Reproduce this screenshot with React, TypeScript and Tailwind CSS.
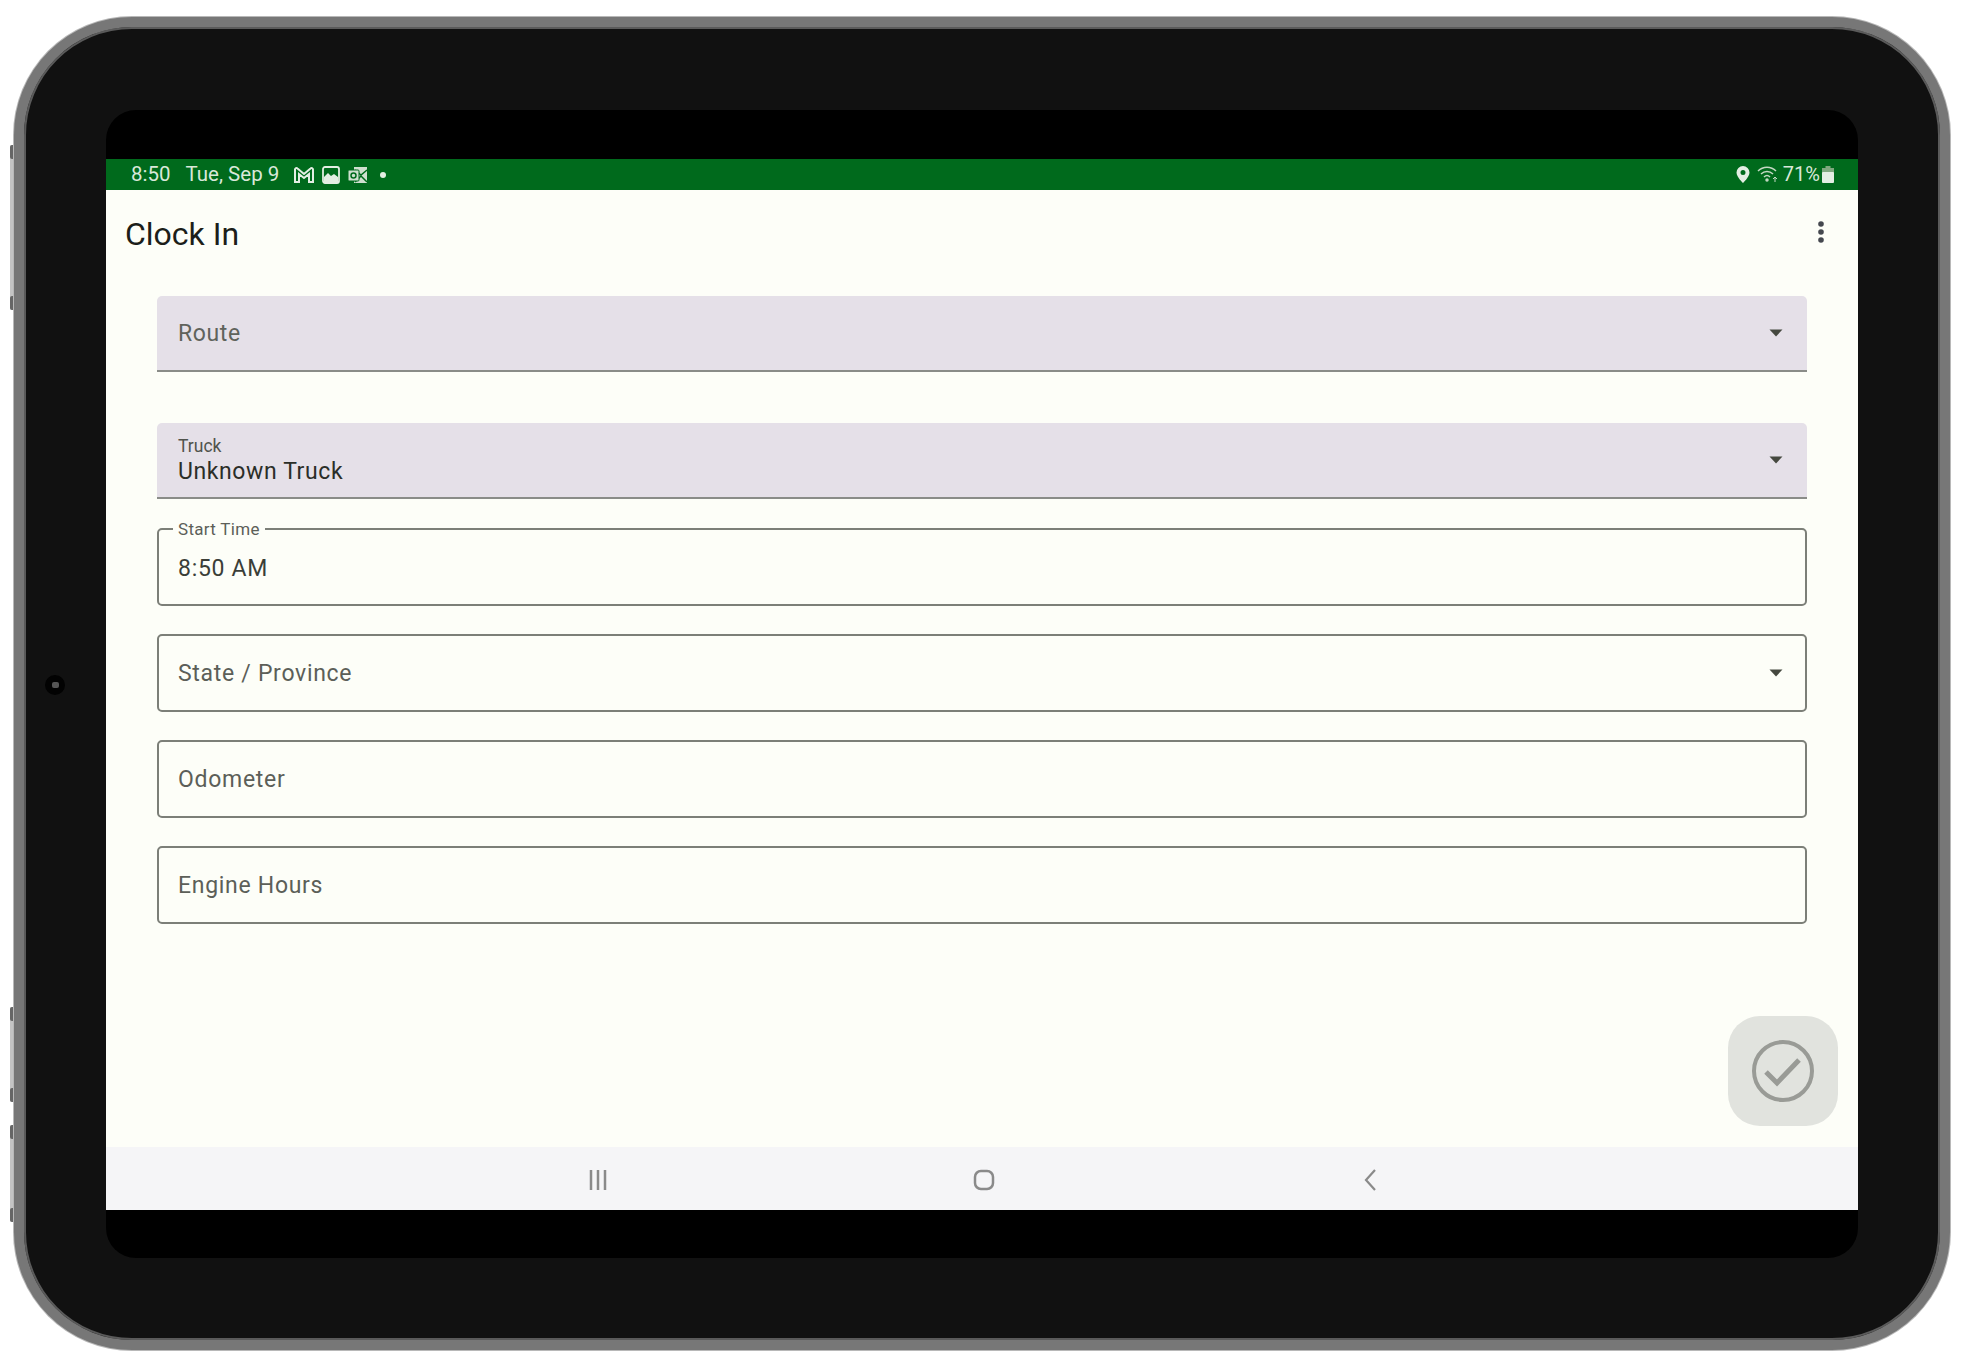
const font = { fontFamily: "Roboto, sans-serif" };

function GmailIcon() {
  return (
    <svg width="22" height="18" viewBox="0 0 22 18" fill="none" stroke="#e3eee3" strokeWidth="2">
      <path d="M2 16V3.5C2 2 3.5 1.5 4.5 2.5L11 8l6.500-5.500C18.500 1.500 20 2 20 3.500V16h-4V8l-5 4-5-4v8z" />
    </svg>
  );
}

function PhotoIcon() {
  return (
    <svg width="18" height="18" viewBox="0 0 18 18">
      <rect x="1" y="1" width="16" height="16" rx="2" fill="none" stroke="#e3eee3" strokeWidth="1.800" />
      <path d="M2 11l4-4 3 3 3-2 4 3v5H2z" fill="#e3eee3" />
    </svg>
  );
}

function OutlookIcon() {
  return (
    <svg width="21" height="18" viewBox="0 0 21 18">
      <path d="M7 1h13v16H7z" fill="#cfe0cf" />
      <path d="M8 4l6 5 6-5M8 16l6-6 6 6" fill="none" stroke="#006a1c" strokeWidth="1.500" />
      <rect x="1" y="4" width="11" height="11" rx="1" fill="#cfe0cf" stroke="#006a1c" />
      <circle cx="6.500" cy="9.500" r="2.500" fill="none" stroke="#006a1c" strokeWidth="1.500" />
    </svg>
  );
}

function StatusBar() {
  return (
    <div style={font} className="flex h-[31px] items-center justify-between bg-[#006a1c] pl-[25px] pr-[24px] text-[#d9e8d9]">
      <div className="flex items-center text-[20.500px]">
        <span>8:50</span>
        <span className="ml-[15px]">Tue, Sep 9</span>
        <span className="ml-[14px] flex items-center gap-[7px]">
          <GmailIcon />
          <PhotoIcon />
          <OutlookIcon />
        </span>
        <span className="ml-[12px] h-[6px] w-[6px] rounded-full bg-[#e3eee3]" />
      </div>
      <div className="flex items-center pb-[1px] text-[20px]">
        <svg width="14" height="17" viewBox="0 0 14 17">
          <path fillRule="evenodd" d="M7 0a6.500 6.500 0 0 1 6.500 6.500C13.500 11 7 17 7 17S.5 11 .5 6.500A6.500 6.500 0 0 1 7 0zm0 4a2.500 2.500 0 1 0 0 5 2.500 2.500 0 0 0 0-5z" fill="#e3eee3" />
        </svg>
        <svg className="ml-[7.500px]" width="22" height="18" viewBox="0 0 22 18" fill="none" stroke="#c3d8c3" strokeWidth="1.500">
          <path d="M1 6c5-5 13-5 18 0M4 9c3.500-3.500 8.500-3.500 12 0M7 12c2-2 4-2 6 0" />
          <circle cx="10" cy="15" r="1" fill="#c3d8c3" />
          <path d="M18 17v-5m-2 2l2-2 2 2" strokeWidth="1" />
        </svg>
        <span className="ml-[3.500px]">71%</span>
        <svg className="ml-[2px]" width="12" height="17" viewBox="0 0 12 17">
          <path d="M3.500 0h5v2H3.500z" fill="#7fa87f" />
          <rect x="0" y="2" width="12" height="5" fill="#7fa87f" />
          <rect x="0" y="6" width="12" height="11" rx="1" fill="#e3eee3" />
        </svg>
      </div>
    </div>
  );
}

function CaretDown() {
  return (
    <svg width="14" height="8" viewBox="0 0 14 8" className="shrink-0">
      <path d="M0.500 0.500h13L7 7.500z" fill="#45483f" />
    </svg>
  );
}

function FilledSelect({ label, value, className }: { label: string; value?: string; className?: string }) {
  return (
    <div
      style={font}
      className={`flex h-[76px] items-center justify-between rounded-t-[5px] border-b-2 border-[#8a8c88] bg-[#e5e0e8] pl-[21px] pr-[24px] ${className ?? ""}`}
    >
      {value ? (
        <div className="flex flex-col pt-[2px]">
          <span className="text-[17.500px] leading-[20px] text-[#50534c]">{label}</span>
          <span className="text-[23px] leading-[31px] tracking-[0.6px] text-[#2b2e28]">{value}</span>
        </div>
      ) : (
        <span className="pt-[2px] text-[23px] tracking-[0.6px] text-[#60635c]">{label}</span>
      )}
      <CaretDown />
    </div>
  );
}

function OutlinedField({ label, caret, className }: { label: string; caret?: boolean; className?: string }) {
  return (
    <div
      style={font}
      className={`flex h-[78px] items-center justify-between rounded-[5px] border-2 border-[#7c7f78] pl-[19px] pr-[22px] ${className ?? ""}`}
    >
      <span className="pt-[2px] text-[23px] tracking-[0.7px] text-[#5c5f58]">{label}</span>
      {caret && <CaretDown />}
    </div>
  );
}

function StartTime() {
  return (
    <div style={font} className="relative mt-[29px] flex h-[78px] items-center rounded-[5px] border-2 border-[#7c7f78] pl-[19px]">
      <span className="absolute left-[14px] top-[-11px] bg-[#fdfef8] px-[5px] text-[17px] leading-[20px] tracking-[0.3px] text-[#5c5f58]">
        Start Time
      </span>
      <span className="pt-[4px] text-[23px] tracking-[0.7px] text-[#3b3e38]">8:50 AM</span>
    </div>
  );
}

function SideButton({ className }: { className: string }) {
  return (
    <div className={`absolute left-[10px] w-[5px] rounded-l-[2px] bg-[#c4c4c4] ${className}`}>
      <div className="flex h-full flex-col justify-between">
        <div className="h-[14px] rounded-l-[2px] bg-[#666666]" />
        <div className="h-[14px] rounded-l-[2px] bg-[#666666]" />
      </div>
    </div>
  );
}

export default function App() {
  return (
    <div className="relative h-[1370px] w-[1962px] overflow-hidden bg-white pl-[14px] pt-[17px]">
      <SideButton className="top-[145px] h-[165px]" />
      <SideButton className="top-[1007px] h-[95px]" />
      <SideButton className="top-[1125px] h-[97px]" />

      <div className="relative h-[1333px] w-[1936px] rounded-[118px] border-[10px] border-[#777777] bg-[#111111] pl-[82px] pt-[83px] shadow-[inset_0_0_0_2px_#5a5a5a,0_0_0_1px_#b8b8b8]">
        {/* front camera */}
        <div className="absolute left-[21px] top-[648px] flex h-[20px] w-[20px] items-center justify-center rounded-full bg-[#020202]">
          <div className="h-[6px] w-[7px] rounded-[2px] bg-[#555555]" />
        </div>

        <div className="flex h-[1148px] w-[1752px] flex-col overflow-hidden rounded-[30px] bg-black">
          <div className="h-[49px] shrink-0" />
          <StatusBar />

          <div className="relative flex h-[957px] flex-col bg-[#fdfef8] px-[51px]">
            <div className="-mx-[51px] flex h-[106px] items-start justify-between pl-[19px] pr-[34px]">
              <h1 style={font} className="pt-[24px] text-[32px] leading-[40px] text-[#1c1e1a]">
                Clock In
              </h1>
              <svg className="mt-[31px]" width="6" height="22" viewBox="0 0 6 22" fill="#45484f">
                <circle cx="3" cy="3" r="2.800" />
                <circle cx="3" cy="11" r="2.800" />
                <circle cx="3" cy="19" r="2.800" />
              </svg>
            </div>

            <FilledSelect label="Route" />
            <FilledSelect label="Truck" value="Unknown Truck" className="mt-[51px]" />
            <StartTime />
            <OutlinedField label="State / Province" caret className="mt-[28px]" />
            <OutlinedField label="Odometer" className="mt-[28px]" />
            <OutlinedField label="Engine Hours" className="mt-[28px]" />

            <div className="absolute right-[20px] top-[826px] flex h-[110px] w-[110px] items-center justify-center rounded-[32px] bg-[#e1e3de]">
              <svg width="64" height="64" viewBox="0 0 64 64" fill="none" stroke="#999b96">
                <circle cx="32" cy="32" r="29" strokeWidth="4" />
                <path d="M15 33l11 11 22-23" strokeWidth="5" />
              </svg>
            </div>
          </div>

          <div className="flex h-[63px] items-center justify-center bg-[#f5f5f7] pl-[3px] pt-[2px]">
            <div className="flex w-[386px] justify-center">
              <svg width="20" height="20" viewBox="0 0 20 20" stroke="#8a8a8a" strokeWidth="2.500">
                <path d="M3 0v20M10 0v20M17 0v20" />
              </svg>
            </div>
            <div className="flex w-[386px] justify-center">
              <svg width="22" height="22" viewBox="0 0 22 22" fill="none" stroke="#8a8a8a" strokeWidth="2.500">
                <rect x="2" y="2" width="18" height="18" rx="6" />
              </svg>
            </div>
            <div className="flex w-[386px] justify-center">
              <svg width="14" height="22" viewBox="0 0 14 22" fill="none" stroke="#8a8a8a" strokeWidth="2.200">
                <path d="M12 1L3 11l9 10" />
              </svg>
            </div>
          </div>
        </div>
      </div>
    </div>
  );
}
